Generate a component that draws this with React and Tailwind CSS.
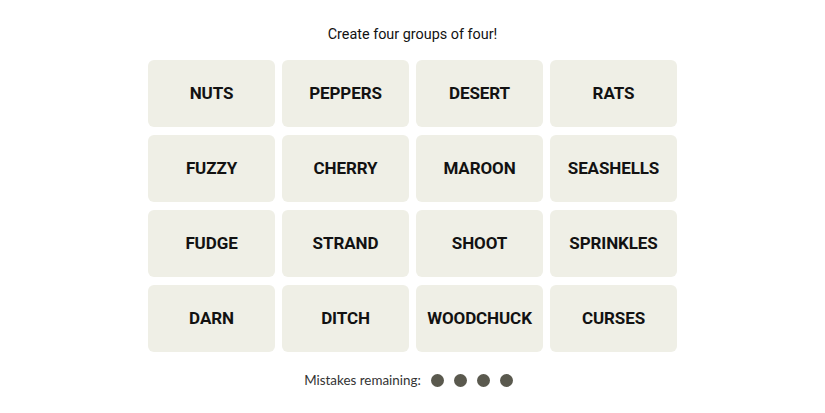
import React from "react";

const words = [
  "NUTS", "PEPPERS", "DESERT", "RATS",
  "FUZZY", "CHERRY", "MAROON", "SEASHELLS",
  "FUDGE", "STRAND", "SHOOT", "SPRINKLES",
  "DARN", "DITCH", "WOODCHUCK", "CURSES",
];

export default function App() {
  return (
    <div className="w-[825px] h-[413px] bg-white flex flex-col items-center font-['Roboto','Liberation_Sans',sans-serif]">
      <p className="mt-[26px] h-[18px] leading-[18px] text-[14.4px] text-[#121212]">
        Create four groups of four!
      </p>
      <div className="mt-[16px] grid grid-cols-[repeat(4,127px)] grid-rows-[repeat(4,67px)] gap-x-[7px] gap-y-[8px]">
        {words.map((w) => (
          <div
            key={w}
            className="bg-[#efefe6] rounded-[6px] flex items-center justify-center text-[17px] font-bold text-[#121212] tracking-[-0.1px]"
          >
            {w}
          </div>
        ))}
      </div>
      <div className="mt-[18px] ml-[-8px] flex items-center gap-[10px] text-[13.4px] text-[#333] font-['Lato','Liberation_Sans',sans-serif]">
        <span>Mistakes remaining:</span>
        <div className="flex gap-[10px]">
          {[0, 1, 2, 3].map((i) => (
            <span key={i} className="w-[13px] h-[13px] rounded-full bg-[#5a594e]" />
          ))}
        </div>
      </div>
    </div>
  );
}
